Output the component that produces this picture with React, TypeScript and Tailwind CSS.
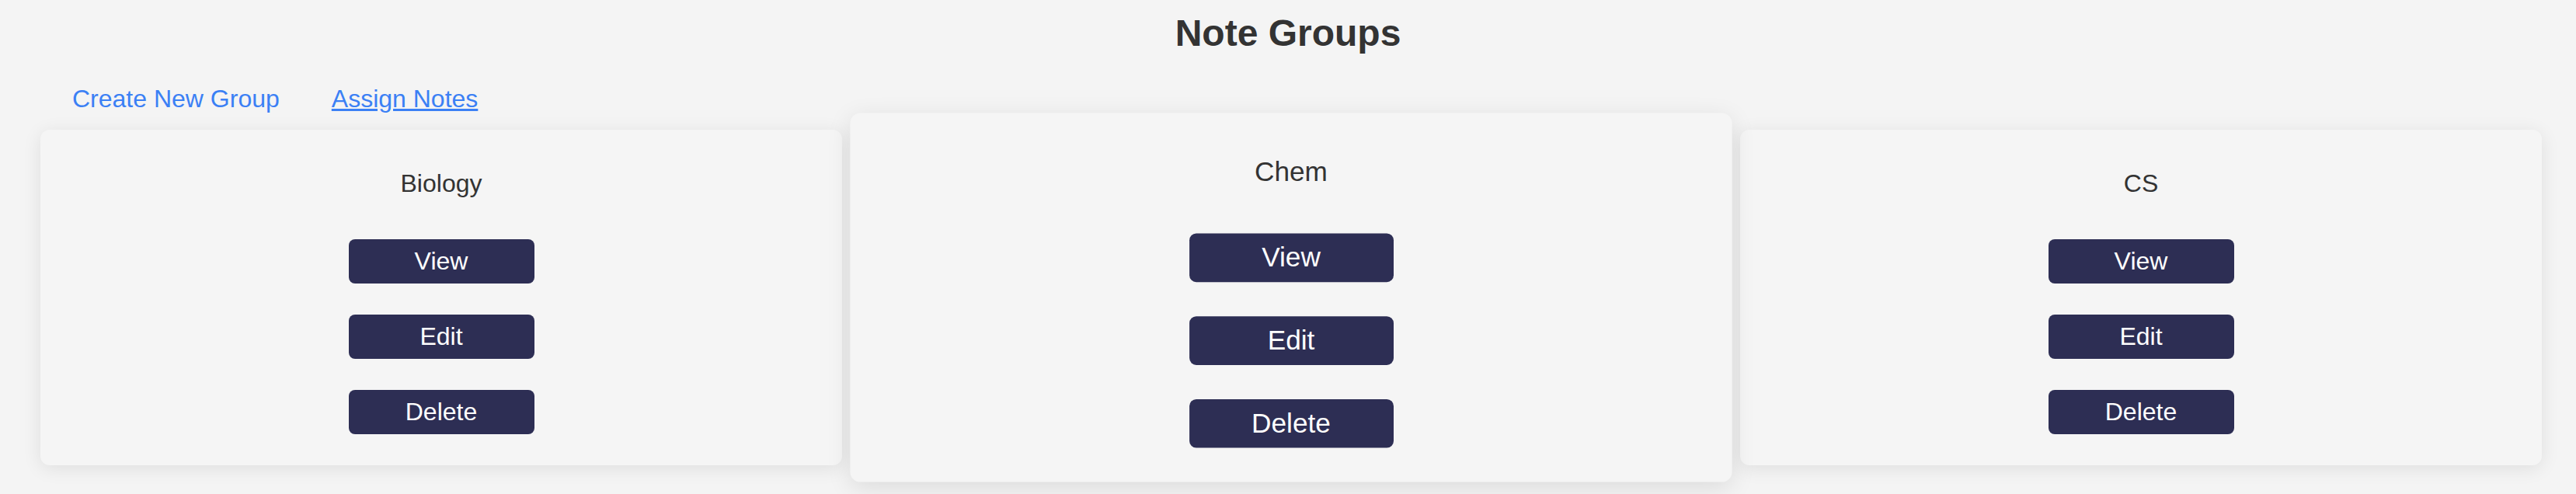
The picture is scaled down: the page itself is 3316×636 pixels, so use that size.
import React from "react";

const groups = [
  { name: "Biology", active: false },
  { name: "Chem", active: true },
  { name: "CS", active: false },
];

function GroupCard({ name, active }: { name: string; active: boolean }) {
  return (
    <div
      className={
        active
          ? "flex-1 flex flex-col items-center rounded-[12px] bg-[#f5f5f5] pt-[51px] pb-10 scale-110 shadow-[0_6px_28px_rgba(0,0,0,0.1)]"
          : "flex-1 flex flex-col items-center rounded-[12px] bg-[#f5f5f5] pt-[51px] pb-10 shadow-[0_4px_24px_rgba(0,0,0,0.09)]"
      }
    >
      <h3 className="text-[32px] leading-[37px] text-[#333]">{name}</h3>
      <div className="mt-[53px] flex flex-col items-center gap-10">
        {["View", "Edit", "Delete"].map((label) => (
          <button
            key={label}
            className="h-[57px] w-[239px] rounded-[8px] bg-[#2d2e54] text-[32px] leading-[37px] text-white"
          >
            {label}
          </button>
        ))}
      </div>
    </div>
  );
}

export default function App() {
  return (
    <div className="min-h-[636px] w-full bg-[#f4f4f4] font-['Liberation_Sans',Arial,sans-serif]">
      <h1 className="pt-[15px] text-center text-[48px] leading-[55px] font-bold text-[#333]">
        Note Groups
      </h1>
      <nav className="mt-[39px] flex gap-[67px] pl-[93px] text-[32px] leading-[37px] text-[#3b80f5]">
        <a href="#">Create New Group</a>
        <a href="#" className="underline">
          Assign Notes
        </a>
      </nav>
      <div className="mt-[21px] flex gap-[62px] pl-[52px] pr-[44px]">
        {groups.map((g) => (
          <GroupCard key={g.name} name={g.name} active={g.active} />
        ))}
      </div>
    </div>
  );
}
